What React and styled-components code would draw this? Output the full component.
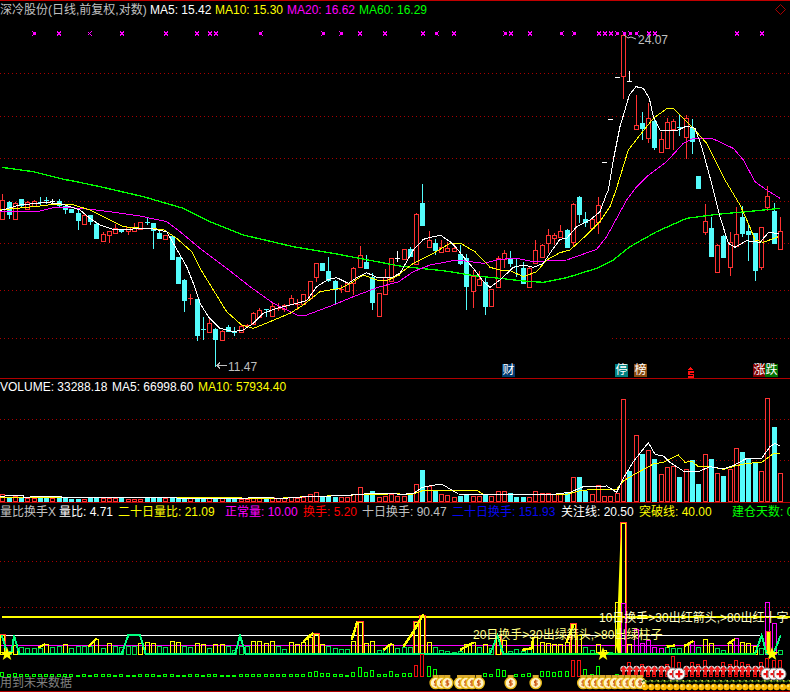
import styled, { createGlobalStyle } from "styled-components";

const GlobalStyle = createGlobalStyle`
  html, body {
    margin: 0;
    background: #000;
  }
`;

const RED = "#ff3232";
const CYAN = "#54fcfc";
const YELLOW = "#ffff00";
const MAGENTA = "#ff00ff";
const GREEN = "#00ff00";
const SPRING = "#00ff80";
const GRID = "#a80000";

const PRICE_TOP = 18;
const PRICE_H = 360;
const VOLUME_TOP = 395;
const VOLUME_H = 107;
const INDEX_TOP = 520;
const INDEX_H = 171;

const barX = (i) => Math.round(2.3 + 6.27 * i);

// price candles: [high, bodyTop, bodyBottom, low, kind]
const LEFT = [
  [42,60,118,118,"r"],[62,65,100,118,"c"],[65,68,115,116,"r"],[57,57,75,80,"c"],[64,66,88,90,"r"],[60,62,78,80,"r"],
  [52,65,65,75,"c"],[52,60,60,72,"c"],[58,64,64,72,"w"],[58,62,75,80,"c"],[72,78,88,102,"c"],[86,88,98,100,"c"],
  [88,100,122,150,"c"],[100,106,134,136,"r"],[104,106,124,135,"c"],[130,132,175,178,"c"],[155,163,183,183,"r"],[152,154,166,190,"r"],
  [132,145,160,162,"r"],[146,148,155,160,"c"],[140,142,154,165,"r"],[128,142,155,157,"r"],[125,127,147,149,"r"],[115,125,125,135,"c"],
  [128,130,152,207,"c"],[150,159,173,178,"c"],[164,166,178,180,"r"],[166,168,236,238,"c"],[230,232,310,312,"c"],[298,300,360,395,"c"],
  [342,354,354,375,"r"],[356,358,465,483,"c"],[412,448,448,480,"c"],[418,430,456,458,"r"],[445,447,477,560,"c"],[450,452,479,481,"r"],
  [436,440,451,456,"c"],[442,456,456,467,"c"],[436,438,457,459,"r"],[432,436,436,445,"r"],[395,400,432,434,"r"],[385,390,410,412,"r"],
  [386,388,388,410,"c"],[365,378,408,410,"r"],[370,384,384,392,"r"],[372,374,385,395,"r"],[345,355,372,374,"r"],[358,372,372,390,"r"],
  [341,343,372,374,"r"],[302,304,355,357,"r"],[248,250,292,305,"r"],[248,250,270,272,"c"],[232,272,300,305,"c"],[301,303,328,372,"c"],
  [316,328,328,338,"r"],[306,308,332,334,"r"],[262,264,308,345,"r"],[198,225,260,262,"r"],[226,245,262,264,"c"],[278,290,365,390,"c"],
  [338,340,410,412,"r"],[268,290,340,342,"r"],[233,235,305,307,"r"],[214,233,233,247,"w"],[206,208,237,239,"r"],[200,207,228,230,"c"],
  [100,102,252,254,"r"],[12,68,135,137,"c"],[153,180,201,203,"r"],[178,189,210,225,"c"],[180,200,215,217,"r"],[185,204,213,215,"r"],
  [188,204,212,214,"r"],[195,222,249,255,"c"],[222,235,320,390,"c"],[270,288,332,385,"r"],[272,297,315,317,"r"],[295,305,378,405,"c"],
  [326,328,380,382,"r"],[228,235,323,325,"r"],[210,220,237,265,"r"],[213,238,249,262,"c"],[235,258,258,290,"c"],[245,264,310,312,"c"],
  [260,265,321,323,"r"],[180,211,250,252,"r"],[193,195,232,234,"r"],[147,165,188,220,"r"],[160,166,176,195,"r"],[135,153,171,173,"r"],
  [148,150,202,205,"c"],[70,72,185,198,"r"],[48,50,101,130,"c"],[97,117,127,140,"c"],[115,118,144,146,"r"],[52,76,128,162,"r"],
];
const PEAK = [
  [162,162,162,162,"w"],[119,119,119,119,"w"],[77,77,77,77,"w"],[35,35,76,99,"r"],[71,81,81,81,"W"],[95,125,129,130,"r"],
  [112,123,128,140,"c"],[103,118,138,143,"r"],[120,121,147,150,"c"],[132,139,152,153,"r"],[118,122,148,149,"r"],[119,121,129,150,"r"],
  [115,127,127,136,"c"],[115,118,137,159,"r"],[119,128,141,154,"c"],[176,176,188,188,"c"],
];
const RIGHT = [
  [72,123,156,165,"r"],[110,144,229,232,"c"],[193,195,275,277,"r"],[166,168,232,235,"c"],[155,186,262,288,"r"],[82,162,198,200,"r"],
  [78,111,158,170,"c"],[130,152,162,242,"c"],[158,160,270,302,"c"],[140,142,262,270,"r"],[18,48,80,92,"r"],[70,93,188,190,"c"],[112,154,208,210,"r"],
];
const fromZoom = ([a, b, c, d, k]) => [180 + a / 3, 180 + b / 3, 180 + c / 3, 180 + d / 3, k];
const CANDLES = [...LEFT.map(fromZoom), ...PEAK, ...RIGHT.map(fromZoom)];

const trace = (ox, oy, pts) =>
  pts.split(" ").map((p) => {
    const [x, y] = p.split(",");
    return `${ox + x / 3},${oy + y / 3}`;
  }).join(" ");

const MA5 = [
  trace(0, 180, "0,92 60,75 130,68 175,70 205,78 240,90 270,115 300,135 345,150 400,147 450,145 500,155 520,190 560,260 580,310 600,370 625,410 660,445 700,455 730,450 760,430 790,400 830,385 870,375 920,362 950,320 985,298 1010,293 1045,310 1075,290 1100,278 1130,292 1175,293 1199,280"),
  trace(400, 180, "0,280 40,210 70,178 100,170 122,166 150,185 170,205 190,230 220,265 250,305 270,322 300,300 340,262 370,255 400,262 430,250 460,205 480,178 500,175 530,140 570,120 600,95 620,40"),
  trace(400, 0, "625,570 640,480 660,380 688,285 708,260 730,265 748,295 760,350 782,393 815,392 835,390 860,378 885,385 905,440"),
  trace(400, 180, "932,0 960,110 985,190 1005,202 1040,182 1080,187 1105,158 1138,160"),
].join(" ");
const MA10 = [
  trace(0, 180, "0,90 50,85 120,78 170,72 215,73 270,90 320,115 370,140 430,145 490,148 530,175 575,215 600,265 640,330 680,395 725,435 760,445 810,425 870,400 910,375 960,335 1020,325 1060,305 1090,285 1130,300 1165,300 1199,285"),
  trace(400, 180, "0,280 40,250 100,220 150,190 185,192 225,215 270,262 300,270 330,272 370,290 410,275 440,240 480,218 510,210 560,165 600,125 630,80"),
  trace(400, 0, "648,570 685,450 720,405 760,355 800,326 820,325 850,355 880,385 920,430 960,510"),
  trace(400, 180, "975,0 1020,75 1045,130 1065,180 1090,187 1135,170"),
].join(" ");
const MA20 = [
  trace(0, 180, "0,93 60,95 120,93 160,83 200,82 270,88 330,95 420,108 500,125 540,155 600,205 680,265 750,320 820,370 890,405 920,405 1000,375 1060,350 1140,320 1199,305"),
  trace(400, 180, "0,302 40,275 90,255 170,240 250,250 300,238 350,235 400,245 500,240 590,208 620,170 680,60 710,20"),
  trace(400, 0, "740,530 800,485 850,430 880,415 940,417 1000,445 1030,480"),
  trace(400, 180, "1065,5 1100,30 1140,55"),
].join(" ");
const MA60 = [
  trace(0, 0, "5,502 100,515 200,540"),
  trace(0, 180, "205,0 300,20 430,50 550,85 630,125 730,165 880,200 1000,220 1199,258"),
  trace(400, 180, "0,258 60,265 130,272 230,288 300,295 370,303 430,307 500,293 590,265 640,240 690,200 770,155 860,115 960,102 1040,95 1140,85"),
].join(" ");

const MARKS = [
  [34.3,1],[59,0],[89.7,0],[122,0],[166,0],[197,0],[210,0],[216,0],[260.7,1],[323.3,1],[341.3,1],[360,0],[385,0],
  [423,0],[436.7,1],[454,0],[505.3,1],[511,0],[530,0],[561.7,1],[574.3,1],[599,0],[605,0],[611,0],[617.3,1],[624.3,1],[630.3,1],[636.7,1],[649,0],[655,0],[737,0],[762,0],
];

const VOLUMES = [
  7,4,5,4,3,3,3,3,3,3,3,2,2,2,3,4,3,3,3,3,2,2,2,3,3,3,3,3,3,3,3,3,3,3,3,3,3,2,2,2,3,3,3,4,3,3,4,3,4,7,9,5,4,4,4,4,7,14,7,10,4,5,7,5,
  5,6,17,31,15,10,7,6,4,5,6,5,5,6,5,10,10,8,4,4,4,10,8,8,7,7,9,24,24,10,7,16,5,5,8,102,30,66,47,51,42,27,34,35,24,32,41,17,47,42,28,25,32,53,49,43,39,30,103,74,28,
];
const VOL_MA5 = [
  trace(0, 375, "0,365 30,361 70,361 70,367 110,365 185,365 185,367 700,370 790,368 850,370 920,365 1030,362 1105,356 1165,354 1199,358"),
  trace(400, 375, "0,358 40,356 65,338 90,332 125,327 150,342 175,357 250,360 300,358 400,360 460,358 510,352 550,335 620,333 650,352 670,310 700,260 745,203 765,238 790,243 810,262 850,288 900,288 930,275 970,282 1000,272 1040,250 1085,250 1110,215 1125,205 1140,213"),
].join(" ");
const VOL_MA10 = [
  trace(0, 375, "0,366 700,368 800,372 900,366 1060,360 1199,356"),
  trace(400, 375, "0,360 40,357 70,346 230,346 250,358 400,360 500,358 540,347 580,343 650,343 670,318 700,300 760,267 790,262 835,240 855,262 875,258 895,275 930,275 970,283 1010,272 1040,265 1085,262 1120,236 1140,235"),
].join(" ");

// turnover bars above the base line: colour letter + height
const TURNOVER = (
  "r20 g2 y9 g7 g6 g6 g6 y10 g7 g8 y10 g6 g8 g8 g8 y15 g6 y11 g8 g7 g8 g8 y11 y12 y11 g8 g7 y13 y12 g8 g7 y11 y10 g6 y10 y10 g8 g4 g8 g8 y13 y13 y11 y13 " +
  "g8 g5 y12 y10 y12 y17 r21 y10 g8 g6 g5 g5 y13 r33 y11 y13 g4 g6 y10 g6 g7 g7 r33 r39 y12 g7 g4 g3 g2 g3 y10 y12 g7 y10 g6 r18 y14 g3 g5 g3 g6 y17 " +
  "y12 y11 y10 y10 y12 r31 y19 g7 g4 y10 y4 g2 y52 r132 y10 m25 m11 m14 m7 m6 g7 g6 g6 y10 m13 g7 y15 y11 g6 g4 y11 m16 y12 y11 y8 g6 m52 m31 g4"
).split(" ");
const TURN_COLOR = { y: YELLOW, g: "#00e050", m: MAGENTA };

const LOW_BARS = [
  4,2,3,2,2,2,2,2,2,2,2,2,1,2,1,2,2,2,1,2,1,1,2,2,2,1,2,2,1,1,2,2,1,2,2,1,1,1,2,2,2,2,2,2,2,2,2,2,2,4,5,3,3,2,2,1,4,9,4,6,2,2,5,2,3,3,11,22,10,7,
  0,0,0,0,0,0,0,3,2,7,6,0,2,2,3,0,5,5,4,5,5,16,16,7,2,10,0,0,2,0,14,10,12,8,8,10,12,20,14,8,14,12,16,10,8,14,12,16,14,12,10,14,18,16,16,
];

const WEDGES = [
  trace(0, 595, "115,158 135,148"),
  trace(0, 595, "265,155 290,130"),
  trace(270, 595, "100,140 130,113"),
  trace(270, 595, "245,135 262,80"),
  trace(270, 595, "400,155 430,110 460,58"),
  trace(270, 595, "340,165 365,145"),
  trace(270, 595, "570,165 610,143"),
  trace(270, 595, "755,165 785,160 790,125"),
  trace(540, 500, "80,425 100,375"),
  trace(540, 500, "380,440 405,436"),
  trace(540, 500, "435,438 460,423"),
  trace(540, 500, "563,432 585,417"),
];
const STEP_LINE = [
  trace(0, 595, "5,120 22,175 35,170 42,122 58,177 365,177 385,120 420,120 437,177 705,177 720,122 737,177 809,177"),
  trace(270, 595, "0,177 660,177 682,122 700,177 809,177"),
  trace(540, 500, "0,462 645,462 665,406 680,462 700,462 722,406"),
].join(" ");

const BAGS = [435.7,441.7,447.3,460,466,472,478.7,510.7,535.7,583.3,589.6,595.9,602.2,608.5,614.8,621,627.3,633.6,640];
const ARROWS = [99,100,101,102,103,104,105,106,109,110,111,112,113,114,115,116,117,118,119,120,121];
const CROSSES = [107,108,122,123,124];
const COINS = Array.from({ length: 24 }, (_, n) => 645 + n * 6.27);

const Page = styled.div`
  width: 790px;
  height: 692px;
  display: flex;
  flex-direction: column;
  background: #000;
  border-top: 1px solid #c00000;
  box-sizing: border-box;
  overflow: hidden;
  font-family: "Liberation Sans", "Noto Sans CJK SC", sans-serif;
  font-size: 12px;
`;

const Panel = styled.section`
  height: ${(p) => p.$height}px;
  flex: none;
  display: flex;
  flex-direction: column;
  box-sizing: border-box;
  border-bottom: 1px solid #b00000;
`;

const Legend = styled.header`
  height: ${(p) => p.$height}px;
  flex: none;
  display: flex;
  align-items: center;
  white-space: nowrap;
  overflow: hidden;
`;

const LegendItem = styled.span`
  flex: 0 0 ${(p) => p.$width}px;
  color: ${(p) => p.$color};
  line-height: 14px;
`;

const Diamond = styled.svg`
  width: 11px;
  height: 11px;
  margin-left: auto;
  margin-right: 4px;
  flex: none;
`;

const ChartArea = styled.div`
  position: relative;
  flex: 1;
  min-height: 0;
`;

const Plot = styled.svg`
  display: block;
  width: 790px;
  height: 100%;
`;

const ChartLabel = styled.span`
  position: absolute;
  left: ${(p) => p.$x}px;
  top: ${(p) => p.$y}px;
  color: ${(p) => p.$color};
  line-height: 12px;
  white-space: nowrap;
`;

const Badge = styled.span`
  position: absolute;
  left: ${(p) => p.$x}px;
  top: 346px;
  width: 13px;
  height: 13px;
  background: ${(p) => p.$bg};
  color: #fff;
  line-height: 13px;
  text-align: center;
`;

const GridLine = ({ y, x1 = 0, x2 = 790 }) => (
  <line x1={x1} x2={x2} y1={y + 0.5} y2={y + 0.5} stroke={GRID} strokeDasharray="1 3" />
);

const Line = ({ points, color, width = 1 }) => (
  <polyline points={points} fill="none" stroke={color} strokeWidth={width} shapeRendering="crispEdges" />
);

const Candle = ({ i, high, top, bottom, low, kind }) => {
  const x = barX(i);
  const color = kind === "r" ? RED : kind === "c" ? CYAN : "#fff";
  const doji = Math.abs(bottom - top) < 1;
  return (
    <g shapeRendering="crispEdges">
      {low > high && <line x1={x + 0.5} x2={x + 0.5} y1={high} y2={low} stroke={color} />}
      {doji ? (
        <line x1={x - 2} x2={x + 3} y1={Math.round(top) + 0.5} y2={Math.round(top) + 0.5} stroke={color} />
      ) : (
        <rect
          x={x - 1.5}
          y={Math.round(top) + 0.5}
          width={4}
          height={Math.round(bottom - top)}
          fill={kind === "c" ? CYAN : "#000"}
          stroke={color}
        />
      )}
    </g>
  );
};

const Mark = ({ x, bold }) => (
  <g stroke={MAGENTA} shapeRendering="crispEdges">
    <path d={`M${x - 2} 31.5 l4 4 m0 -4 l-4 4`} fill="none" />
    {bold ? <rect x={x - 1} y={32.5} width={2} height={2} fill={MAGENTA} /> : null}
  </g>
);

const PricePlot = () => (
  <Plot viewBox={`0 ${PRICE_TOP} 790 ${PRICE_H}`}>
    {[73, 116, 158, 201, 243, 290].map((y) => (
      <GridLine key={y} y={y} />
    ))}
    <GridLine y={338} x2={277} />
    <GridLine y={338} x1={612} />
    {MARKS.map(([x, bold]) => (
      <Mark key={x} x={x} bold={bold} />
    ))}
    {CANDLES.map(([high, top, bottom, low, kind], i) => (
      <Candle key={i} i={i} high={high} top={top} bottom={bottom} low={low} kind={kind} />
    ))}
    <Line points={MA60} color={GREEN} width={1.3} />
    <Line points={MA20} color={MAGENTA} />
    <Line points={MA10} color={YELLOW} />
    <Line points={MA5} color="#fff" />
    <path d="M624 35 l4 3 l3 -1 l5 2" fill="none" stroke="#c0c0c0" />
    <path d="M227 365.5 h-10 m3 -3 l-3 3 l3 3" fill="none" stroke="#c0c0c0" shapeRendering="crispEdges" />
    <g fill="#ff1010" shapeRendering="crispEdges">
      <path d="M690.5 367 l2.5 3 h-5 z" />
      <path d="M688 371 h6 v1.5 h-4.5 v1 h4.5 v4 h-6 v-1.5 h4.5 v-1 h-4.5 z" />
    </g>
  </Plot>
);

const VolumePlot = () => (
  <Plot viewBox={`0 ${VOLUME_TOP} 790 ${VOLUME_H}`}>
    <GridLine y={419} />
    <GridLine y={460} />
    {VOLUMES.map((h, i) => {
      const kind = CANDLES[i][4];
      const hollow = kind === "r" || kind === "w";
      return (
        <rect
          key={i}
          x={barX(i) - 1.5}
          y={501.5 - h}
          width={4}
          height={h}
          fill={hollow ? "#000" : CYAN}
          stroke={hollow ? RED : CYAN}
          shapeRendering="crispEdges"
        />
      );
    })}
    <Line points={VOL_MA10} color={YELLOW} />
    <Line points={VOL_MA5} color="#fff" />
  </Plot>
);

const TurnoverBar = ({ i, code }) => {
  const kind = code[0];
  const h = Number(code.slice(1));
  const x = barX(i);
  if (kind === "r") {
    return (
      <g shapeRendering="crispEdges" fill="none">
        <rect x={x - 2.5} y={654.5 - h} width={6} height={h} stroke={RED} />
        <rect x={x - 1.5} y={655.5 - h} width={4} height={h - 1} stroke={YELLOW} />
      </g>
    );
  }
  return (
    <rect x={x - 1.5} y={654.5 - h} width={4} height={h} fill="none" stroke={TURN_COLOR[kind]} shapeRendering="crispEdges" />
  );
};

const Star = ({ x, y }) => (
  <polygon
    fill={YELLOW}
    points={`${x},${y - 7} ${x + 1.8},${y - 2} ${x + 6.5},${y - 2} ${x + 2.8},${y + 1.2} ${x + 4.3},${y + 6} ${x},${y + 3} ${x - 4.3},${y + 6} ${x - 2.8},${y + 1.2} ${x - 6.5},${y - 2} ${x - 1.8},${y - 2}`}
  />
);

const MoneyBag = ({ x }) => (
  <g transform={`translate(${x} 683)`}>
    <rect x={-3} y={-8} width={6} height={2.5} fill="#d8a830" />
    <circle r={5.6} fill="#fff4c8" stroke="#e8b818" strokeWidth={1.4} />
    <path d="M2 -2 h-3.2 v2 h2.6 v2 h-3.4 M0 -3.4 v6.8" fill="none" stroke="#c84a00" strokeWidth={0.9} />
  </g>
);

const RedArrow = ({ x }) => (
  <g transform={`translate(${x} 666)`}>
    <circle cx={0.5} cy={3} r={3.2} fill="#d8d8d8" />
    <path d="M0.5 0 l3.4 4 h-2 v5 h-2.8 v-5 h-2 z" fill="#f01818" />
  </g>
);

const RedCross = ({ x }) => (
  <g transform={`translate(${x} 674)`}>
    <circle r={6} fill="#f8f8f8" stroke="#909090" />
    <rect x={-3.5} y={-1} width={7} height={2.2} fill="#e81010" />
    <rect x={-1} y={-3.5} width={2.2} height={7} fill="#e81010" />
  </g>
);

const Coin = ({ x }) => (
  <g>
    <path d={`M${x - 3} 682 l2 -2 l2 2 l2 -1`} fill="none" stroke="#2e6a14" strokeWidth={1.2} />
    <rect x={x} y={680} width={1.5} height={1.5} fill="#f0e040" />
    <circle cx={x} cy={687} r={3.2} fill="#f8b800" />
    <circle cx={x - 1} cy={686} r={1.2} fill="#ffe870" />
  </g>
);

const IndexPlot = () => (
  <Plot viewBox={`0 ${INDEX_TOP} 790 ${INDEX_H}`}>
    <GridLine y={561} />
    <GridLine y={607} />
    <rect x={2} y={616} width={788} height={2} fill={YELLOW} />
    <rect x={0} y={635} width={760} height={1} fill="#fff" />
    <rect x={0} y={645} width={760} height={1} fill={MAGENTA} />
    {TURNOVER.map((code, i) => (
      <TurnoverBar key={i} i={i} code={code} />
    ))}
    <polygon points="616,646 618,602 620,550 622,523 622,654 618,654" fill={YELLOW} />
    {WEDGES.map((points, i) => (
      <Line key={i} points={points} color={YELLOW} width={2.4} />
    ))}
    <rect x={621.5} y={603.5} width={4} height={50} fill="none" stroke={MAGENTA} shapeRendering="crispEdges" />
    <rect x={766.5} y={631.5} width={4} height={22} fill={YELLOW} stroke={RED} shapeRendering="crispEdges" />
    <Line points={STEP_LINE} color={SPRING} width={2} />
    <rect x={540} y={653} width={216} height={2} fill="#00ff40" />
    <Star x={7} y={654} />
    <Star x={603} y={654} />
    <Star x={772} y={654} />
    {LOW_BARS.map((h, i) =>
      h ? (
        <rect
          key={i}
          x={barX(i) - 1.5}
          y={676.5 - h}
          width={3}
          height={h}
          fill="none"
          stroke={i >= 100 || i === 66 || i === 67 || i === 91 || i === 92 ? "#f01010" : GREEN}
          shapeRendering="crispEdges"
        />
      ) : null
    )}
    {BAGS.map((x) => (
      <MoneyBag key={x} x={x} />
    ))}
    {ARROWS.map((i) => (
      <RedArrow key={i} x={barX(i)} />
    ))}
    {CROSSES.map((i) => (
      <RedCross key={i} x={barX(i)} />
    ))}
    {COINS.map((x) => (
      <Coin key={x} x={x} />
    ))}
  </Plot>
);

const App = () => (
  <Page>
    <GlobalStyle />
    <Panel $height={378}>
      <Legend $height={17}>
        <LegendItem $width={150} $color="#c0c0c0">深冷股份(日线,前复权,对数)</LegendItem>
        <LegendItem $width={65} $color="#fff">MA5: 15.42</LegendItem>
        <LegendItem $width={72} $color={YELLOW}>MA10: 15.30</LegendItem>
        <LegendItem $width={72} $color={MAGENTA}>MA20: 16.62</LegendItem>
        <LegendItem $width={72} $color={GREEN}>MA60: 16.29</LegendItem>
        <Diamond viewBox="0 0 11 11">
          <path d="M5.5 0.5 L10.5 5.5 L5.5 10.5 L0.5 5.5 Z" fill="none" stroke="#a80000" />
        </Diamond>
      </Legend>
      <ChartArea>
        <PricePlot />
        <ChartLabel $x={638} $y={34 - PRICE_TOP} $color="#c0c0c0">24.07</ChartLabel>
        <ChartLabel $x={228} $y={361 - PRICE_TOP} $color="#c0c0c0">11.47</ChartLabel>
        <Badge $x={502} $bg="#003a70">财</Badge>
        <Badge $x={615} $bg="#008080">停</Badge>
        <Badge $x={634} $bg="#884a10">榜</Badge>
        <Badge $x={753} $bg="#800000">涨</Badge>
        <Badge $x={765} $bg="#007000">跌</Badge>
      </ChartArea>
    </Panel>
    <Panel $height={124}>
      <Legend $height={16}>
        <LegendItem $width={112} $color="#fff">VOLUME: 33288.18</LegendItem>
        <LegendItem $width={86} $color="#fff">MA5: 66998.60</LegendItem>
        <LegendItem $width={100} $color={YELLOW}>MA10: 57934.40</LegendItem>
      </Legend>
      <ChartArea>
        <VolumePlot />
      </ChartArea>
    </Panel>
    <Panel $height={189}>
      <Legend $height={17}>
        <LegendItem $width={59} $color="#c0c0c0">量比换手X</LegendItem>
        <LegendItem $width={59} $color="#fff">量比: 4.71</LegendItem>
        <LegendItem $width={107} $color={YELLOW}>二十日量比: 21.09</LegendItem>
        <LegendItem $width={78} $color={MAGENTA}>正常量: 10.00</LegendItem>
        <LegendItem $width={59} $color="#ff0000">换手: 5.20</LegendItem>
        <LegendItem $width={90} $color="#c0c0c0">十日换手: 90.47</LegendItem>
        <LegendItem $width={109} $color="#0808f0">二十日换手: 151.93</LegendItem>
        <LegendItem $width={78} $color="#fff">关注线: 20.50</LegendItem>
        <LegendItem $width={93} $color={YELLOW}>突破线: 40.00</LegendItem>
        <LegendItem $width={66} $color={GREEN}>建仓天数: 0</LegendItem>
      </Legend>
      <ChartArea>
        <IndexPlot />
        <ChartLabel $x={599} $y={612 - INDEX_TOP} $color="#ffffc8">10日换手&gt;30出红箭头,&gt;80出红十字</ChartLabel>
        <ChartLabel $x={473} $y={629 - INDEX_TOP} $color="#ffff80">20日换手&gt;30出绿箭头,&gt;80出绿柱子</ChartLabel>
        <ChartLabel $x={0} $y={677 - INDEX_TOP} $color="#808080">用到未来数据</ChartLabel>
      </ChartArea>
    </Panel>
  </Page>
);

export default App;
